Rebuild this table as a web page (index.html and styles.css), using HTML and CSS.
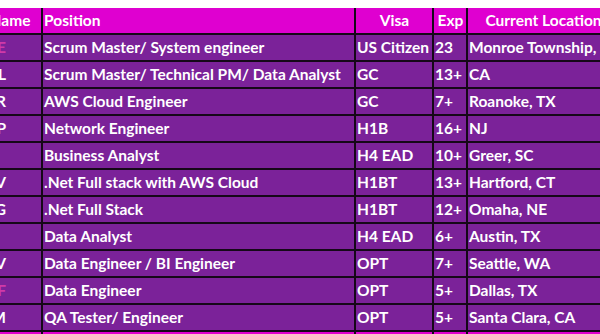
FILE: index.html
```html
<!DOCTYPE html>
<html>
<head>
<meta charset="utf-8">
<link rel="stylesheet" href="styles.css">
</head>
<body>
<div class="sheet">
<table class="grid">
  <colgroup>
    <col class="c-name"><col class="c-pos"><col class="c-visa"><col class="c-exp"><col class="c-loc">
  </colgroup>
  <thead>
    <tr class="head">
      <th class="name">Name</th>
      <th class="left">Position</th>
      <th>Visa</th>
      <th>Exp</th>
      <th>Current Location</th>
    </tr>
  </thead>
  <tbody>
    <tr><td class="name pink">E</td><td>Scrum Master/ System engineer</td><td>US Citizen</td><td>23</td><td>Monroe Township, NJ</td></tr>
    <tr><td class="name">L</td><td>Scrum Master/ Technical PM/ Data Analyst</td><td>GC</td><td>13+</td><td>CA</td></tr>
    <tr><td class="name">R</td><td>AWS Cloud Engineer</td><td>GC</td><td>7+</td><td>Roanoke, TX</td></tr>
    <tr><td class="name">P</td><td>Network Engineer</td><td>H1B</td><td>16+</td><td>NJ</td></tr>
    <tr><td class="name"></td><td>Business Analyst</td><td>H4 EAD</td><td>10+</td><td>Greer, SC</td></tr>
    <tr><td class="name">V</td><td>.Net Full stack with AWS Cloud</td><td>H1BT</td><td>13+</td><td>Hartford, CT</td></tr>
    <tr><td class="name">G</td><td>.Net Full Stack</td><td>H1BT</td><td>12+</td><td>Omaha, NE</td></tr>
    <tr><td class="name"></td><td>Data Analyst</td><td>H4 EAD</td><td>6+</td><td>Austin, TX</td></tr>
    <tr><td class="name">V</td><td>Data Engineer / BI Engineer</td><td>OPT</td><td>7+</td><td>Seattle, WA</td></tr>
    <tr><td class="name pink">F</td><td>Data Engineer</td><td>OPT</td><td>5+</td><td>Dallas, TX</td></tr>
    <tr><td class="name">M</td><td>QA Tester/ Engineer</td><td>OPT</td><td>5+</td><td>Santa Clara, CA</td></tr>
    <tr class="foot"><td></td><td></td><td></td><td></td><td></td></tr>
  </tbody>
</table>
</div>
</body>
</html>
```
FILE: styles.css
```css
html, body {
  margin: 0;
  padding: 0;
  background: #ffffff;
  overflow: hidden;
}
.sheet {
  width: 600px;
  height: 334px;
  overflow: hidden;
  padding-top: 8px;
  box-sizing: border-box;
}
.grid {
  border-collapse: collapse;
  table-layout: fixed;
  width: 632px;
  margin-left: -14px;
  font-family: "Lato", "Liberation Sans", sans-serif;
  font-weight: 700;
  font-size: 15.5px;
  color: #ffffff;
}
.c-name { width: 55px; }
.c-pos { width: 313px; }
.c-visa { width: 78px; }
.c-exp { width: 34px; }
.c-loc { width: 152px; }
.grid th, .grid td {
  border: 2px solid #150818;
  height: 25px;
  padding: 0 0 0 1px;
  white-space: nowrap;
  overflow: hidden;
  text-align: left;
  line-height: 25px;
}
.grid thead th {
  border-top: none;
  background: #df00d0;
  text-align: center;
  height: 25px;
}
.grid thead th.name { padding-right: 10px; }
.grid thead th.left { text-align: left; }
.grid tbody td { background: #7b2299; }
.grid td.name {
  text-align: right;
  padding-right: 35px;
}
.grid td.pink { color: #d03aa8; }
.grid tr.foot td { background: #df00d0; height: 10px; }
```
